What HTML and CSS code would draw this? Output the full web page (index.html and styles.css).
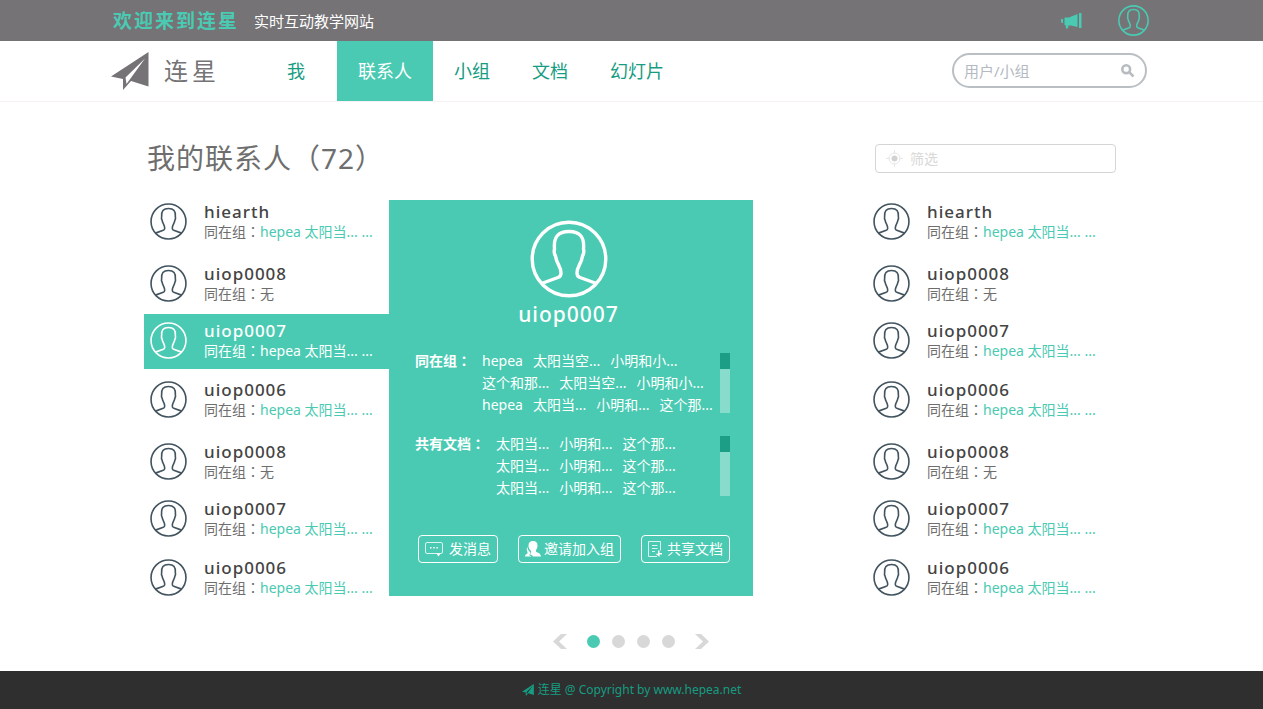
FILE: index.html
```html
<!DOCTYPE html>
<html lang="zh-CN">
<head>
<meta charset="utf-8">
<title>连星</title>
<meta name="viewport" content="width=device-width, initial-scale=1">
<link rel="stylesheet" href="styles.css">
</head>
<body>
<svg class="sprite" aria-hidden="true">
  <symbol id="avatar" viewBox="0 0 78 78">
    <circle cx="39" cy="39" r="36.8"/>
    <path d="M11.500 63.500 L28 57.500 Q31 56.500 31 53 C31 46 26.500 44 25.500 36 Q23.500 33 24.500 29 C23.500 17 28 11.500 39 11.500 S54.500 17 53.500 29 Q54.500 33 52.500 36 C51.500 44 47 46 47 53 Q47 56.500 50 57.500 L66.500 63.500"/>
  </symbol>
  <symbol id="plane" viewBox="0 0 38 38">
    <path fill-rule="evenodd" d="M37.500 0 L0 24.500 L12 27 V38 L20 29 L37.500 34.500 Z M34 6.500 L14.500 25.500 L15.500 32 Z"/>
  </symbol>
</svg>

<div class="topbar">
  <div class="wrap topbar-inner">
    <strong class="welcome">欢迎来到连星</strong>
    <span class="tagline">实时互动教学网站</span>
    <div class="topbar-actions">
      <button class="icon-button" type="button" aria-label="公告">
        <svg class="horn" viewBox="0 0 21 16"><path d="M18 0h2.500v15H18zM16.500 1v13L10 12.500H7.500L7 15.500H5L4.500 12H3.500V4.500H8zM0 6h2v4H1L0 9z"/></svg>
      </button>
      <button class="icon-button" type="button" aria-label="个人中心">
        <svg class="avatar avatar-top"><use href="#avatar"/></svg>
      </button>
    </div>
  </div>
</div>

<header class="header">
  <div class="wrap header-inner">
    <a class="logo" href="#"><svg class="logo-mark"><use href="#plane"/></svg><span>连星</span></a>
    <nav class="nav">
      <a class="nav-me" href="#">我</a>
      <a class="active" href="#" aria-current="page">联系人</a>
      <a href="#">小组</a>
      <a href="#">文档</a>
      <a href="#">幻灯片</a>
    </nav>
    <form class="search">
      <input type="search" placeholder="用户/小组" aria-label="用户/小组">
      <button class="icon-button" type="button" aria-label="搜索">
        <svg class="search-icon" viewBox="0 0 14 14"><circle cx="5.200" cy="5.200" r="3.900"/><path d="M8.200 8.200 L12.500 12.500"/></svg>
      </button>
    </form>
  </div>
</header>

<main class="main">
  <div class="title-row">
    <h1>我的联系人<span class="count">（72）</span></h1>
    <label class="filter">
      <svg class="filter-icon" viewBox="0 0 17 17"><circle class="ring" cx="8.500" cy="8.500" r="5.500"/><circle class="core" cx="8.500" cy="8.500" r="3"/><path class="ring" d="M8.500 0v4M8.500 13v4M0 8.500h4M13 8.500h4"/></svg>
      <input type="text" placeholder="筛选" aria-label="筛选">
    </label>
  </div>

  <div class="board">
    <ul class="contacts">
      <li><svg class="avatar"><use href="#avatar"/></svg><div><h2>hiearth</h2><p>同在组：<a href="#">hepea 太阳当... ...</a></p></div></li>
      <li><svg class="avatar"><use href="#avatar"/></svg><div><h2>uiop0008</h2><p>同在组：无</p></div></li>
      <li class="selected"><svg class="avatar"><use href="#avatar"/></svg><div><h2>uiop0007</h2><p>同在组：<a href="#">hepea 太阳当... ...</a></p></div></li>
      <li><svg class="avatar"><use href="#avatar"/></svg><div><h2>uiop0006</h2><p>同在组：<a href="#">hepea 太阳当... ...</a></p></div></li>
      <li><svg class="avatar"><use href="#avatar"/></svg><div><h2>uiop0008</h2><p>同在组：无</p></div></li>
      <li><svg class="avatar"><use href="#avatar"/></svg><div><h2>uiop0007</h2><p>同在组：<a href="#">hepea 太阳当... ...</a></p></div></li>
      <li><svg class="avatar"><use href="#avatar"/></svg><div><h2>uiop0006</h2><p>同在组：<a href="#">hepea 太阳当... ...</a></p></div></li>
    </ul>

    <section class="card">
      <div class="profile">
        <svg class="avatar avatar-large"><use href="#avatar"/></svg>
        <h2>uiop0007</h2>
      </div>
      <div class="shared">
        <h3>同在组：</h3>
        <ul class="shared-list">
          <li><span>hepea</span><span>太阳当空...</span><span>小明和小...</span></li>
          <li><span>这个和那...</span><span>太阳当空...</span><span>小明和小...</span></li>
          <li><span>hepea</span><span>太阳当...</span><span>小明和...</span><span>这个那...</span></li>
        </ul>
        <div class="track"><div class="thumb"></div></div>
      </div>
      <div class="shared">
        <h3>共有文档：</h3>
        <ul class="shared-list">
          <li><span>太阳当...</span><span>小明和...</span><span>这个那...</span></li>
          <li><span>太阳当...</span><span>小明和...</span><span>这个那...</span></li>
          <li><span>太阳当...</span><span>小明和...</span><span>这个那...</span></li>
        </ul>
        <div class="track"><div class="thumb"></div></div>
      </div>
      <div class="actions">
        <button type="button"><svg class="i-message" viewBox="0 0 18 16"><path class="line" d="M2 1.500h14q1.500 0 1.500 1.500v8q0 1.500-1.500 1.500H2Q.5 12.500.5 11V3Q.5 1.500 2 1.500z"/><path d="M11.500 12.500h4L13.500 15.500zM5 6h1.500v1.500H5zM8.200 6h1.500v1.500H8.200zM11.400 6h1.500v1.500h-1.500z"/></svg>发消息</button>
        <button type="button"><svg class="i-invite" viewBox="0 0 16 16"><path d="M8 0c3 0 4.500 1.500 4.500 4.500 0 2-.5 3-1.500 4.500v1.500c1 1.500 4.500 1 5 5H8c-.5-1-1.500-1.500-3-2 1-1 1.500-2 1-3.500C4.500 8.500 3.500 7 3.500 4.500 3.500 1.500 5 0 8 0z"/><path d="M2.500 6c0 2 1 4 3 5.500-.2 1.500-.8 2-1.500 2.500l2.500 1.500H0c0-2 1.500-2.500 2.500-3V11C1.500 9.500 1.500 7 2.500 6z"/></svg>邀请加入组</button>
        <button type="button"><svg class="i-share" viewBox="0 0 14 16"><path class="line" d="M9 15.500H.5V.5h12v9M4 4.500h5.500M4 7.500h5.500M4 10.500h3"/><path d="M10 9.500h1.500V12H14v1.500h-2.500V16L7.500 12.700H10z"/></svg>共享文档</button>
      </div>
    </section>

    <ul class="contacts contacts-right">
      <li><svg class="avatar"><use href="#avatar"/></svg><div><h2>hiearth</h2><p>同在组：<a href="#">hepea 太阳当... ...</a></p></div></li>
      <li><svg class="avatar"><use href="#avatar"/></svg><div><h2>uiop0008</h2><p>同在组：无</p></div></li>
      <li><svg class="avatar"><use href="#avatar"/></svg><div><h2>uiop0007</h2><p>同在组：<a href="#">hepea 太阳当... ...</a></p></div></li>
      <li><svg class="avatar"><use href="#avatar"/></svg><div><h2>uiop0006</h2><p>同在组：<a href="#">hepea 太阳当... ...</a></p></div></li>
      <li><svg class="avatar"><use href="#avatar"/></svg><div><h2>uiop0008</h2><p>同在组：无</p></div></li>
      <li><svg class="avatar"><use href="#avatar"/></svg><div><h2>uiop0007</h2><p>同在组：<a href="#">hepea 太阳当... ...</a></p></div></li>
      <li><svg class="avatar"><use href="#avatar"/></svg><div><h2>uiop0006</h2><p>同在组：<a href="#">hepea 太阳当... ...</a></p></div></li>
    </ul>
  </div>

  <nav class="pager" aria-label="分页">
    <button class="arrow" type="button" aria-label="上一页"><svg viewBox="0 0 14 15"><path d="M8 0h6L6 7.500 14 15H8L0 7.500z"/></svg></button>
    <div class="dots">
      <button class="dot current" type="button" aria-label="第1页"></button>
      <button class="dot" type="button" aria-label="第2页"></button>
      <button class="dot" type="button" aria-label="第3页"></button>
      <button class="dot" type="button" aria-label="第4页"></button>
    </div>
    <button class="arrow" type="button" aria-label="下一页"><svg viewBox="0 0 14 15"><path d="M6 0H0l8 7.500L0 15h6l8-7.500z"/></svg></button>
  </nav>
</main>

<footer class="footer">
  <svg class="footer-mark"><use href="#plane"/></svg>
  <span>连星 @ Copyright by www.hepea.net</span>
</footer>
</body>
</html>
```

FILE: styles.css
```css
:root {
  --teal: #4acab2;
  --teal-dark: #169c82;
  --gray: #757376;
  --pale: #d8d8d8;
  --centered-punctuation: "Noto Sans", "Noto Sans CJK TC", sans-serif;
}

* { box-sizing: border-box; }

body {
  margin: 0;
  min-height: 100vh;
  display: flex;
  flex-direction: column;
  background: #fff;
  color: #6e6e6e;
  font-family: "Noto Sans", "Noto Sans CJK SC", sans-serif;
  font-size: 14px;
  line-height: 20px;
}

h1, h2, h3, p, ul { margin: 0; padding: 0; }
ul { list-style: none; }
a { color: inherit; text-decoration: none; }
svg { display: block; flex: none; }
button, input { font: inherit; color: inherit; }

.sprite { position: absolute; width: 0; height: 0; }

.wrap {
  width: 100%;
  max-width: 1041px;
  margin: 0 auto;
  padding-right: 5px;
  display: flex;
  align-items: center;
}

.icon-button {
  display: flex;
  padding: 0;
  border: 0;
  background: none;
}

.avatar {
  width: 37px;
  height: 37px;
  fill: none;
  stroke: #42545f;
  stroke-width: 3.4;
}

/* Top bar */
.topbar { background: var(--gray); }
.topbar-inner { height: 41px; padding: 0 3px 0 2px; }
.welcome {
  color: var(--teal);
  font-size: 19px;
  letter-spacing: 2px;
  margin-right: 15px;
}
.tagline { color: #fff; font-size: 15px; }
.topbar-actions {
  display: flex;
  align-items: center;
  gap: 36px;
  margin-left: auto;
}
.horn { width: 21px; height: 16px; fill: var(--teal); }
.avatar-top { width: 31px; height: 31px; stroke: var(--teal); stroke-width: 4; }

/* Header */
.header { border-bottom: 1px solid #f6f2f4; }
.header-inner { height: 60px; }
.logo {
  display: flex;
  align-items: center;
  gap: 15px;
  width: 155px;
  color: var(--gray);
  font-size: 24px;
  letter-spacing: 4px;
}
.logo-mark { width: 38px; height: 38px; fill: var(--gray); }
.nav {
  display: flex;
  color: var(--teal-dark);
  font-size: 18px;
  line-height: 60px;
}
.nav a { padding: 0 21px; }
.nav .nav-me { margin-right: 11px; }
.nav .active { background: var(--teal); color: #fff; }

.search {
  display: flex;
  align-items: center;
  width: 195px;
  height: 35px;
  margin: 0 0 1px auto;
  padding: 0 10px;
  border: 2px solid #babfc4;
  border-radius: 18px;
}
.search input, .filter input {
  flex: 1;
  min-width: 0;
  padding: 0;
  border: 0;
  outline: 0;
  background: none;
}
.search input { font-size: 15px; }
.search input::placeholder { color: #b3bac2; opacity: 1; }
.search-icon { width: 14px; height: 14px; fill: none; stroke: #b8bcc0; stroke-width: 2.6; }

/* Contacts */
.main {
  flex: 1;
  width: 100%;
  max-width: 975px;
  margin: 0 auto;
  padding: 36px 3px 20px 0;
}
.title-row {
  display: flex;
  align-items: center;
  justify-content: space-between;
  padding-left: 3px;
  height: 41px;
}
h1 {
  font-size: 28px;
  font-weight: 400;
  line-height: 41px;
  letter-spacing: 1px;
}
.count { font-family: var(--centered-punctuation); font-feature-settings: "locl" 0; }
.filter {
  display: flex;
  align-items: center;
  gap: 7px;
  width: 241px;
  height: 29px;
  padding: 0 10px;
  border: 1px solid #d5d5d5;
  border-radius: 4px;
}
.filter input::placeholder { color: var(--pale); opacity: 1; }
.filter-icon { width: 17px; height: 17px; }
.filter-icon .ring { fill: none; stroke: #e6e6e6; }
.filter-icon .core { fill: #d2d2d2; }

.board {
  display: grid;
  grid-template-columns: 245px 364px 1fr 249px;
  align-items: start;
  padding-top: 16px;
}
.contacts-right { grid-column: 4; }
.contacts li {
  display: flex;
  align-items: center;
  gap: 17px;
  height: 55px;
  padding: 0 0 2px 6px;
  margin-bottom: 4px;
}
.contacts li:nth-child(3n + 1) { margin-bottom: 7px; }
.contacts li:nth-child(3n + 2) { margin-bottom: 2px; }
.contacts h2 {
  color: #444;
  font-size: 17px;
  font-weight: 500;
  line-height: 21px;
  letter-spacing: 1px;
}
.contacts p {
  font-family: var(--centered-punctuation);
  font-feature-settings: "locl" 0;
  white-space: nowrap;
}
.contacts a { color: var(--teal); }
.contacts .selected { background: var(--teal); }
.contacts .selected, .contacts .selected h2, .contacts .selected a { color: #fff; }
.contacts .selected .avatar { stroke: #fff; }

/* Contact card */
.card {
  margin-top: 5px;
  padding: 20px 23px 33px 26px;
  background: var(--teal);
  color: #fff;
}
.profile {
  display: flex;
  flex-direction: column;
  align-items: center;
  margin-bottom: 21px;
  padding-right: 8px;
}
.avatar-large {
  width: 78px;
  height: 78px;
  stroke: #fff;
}
.profile h2 {
  font-size: 21px;
  font-weight: 500;
  line-height: 32px;
  letter-spacing: 1px;
}
.shared { display: flex; margin-bottom: 17px; }
.shared h3 {
  margin-right: 11px;
  font-family: var(--centered-punctuation);
  font-feature-settings: "locl" 0;
  font-size: 14px;
  font-weight: 600;
  line-height: 20px;
}
.shared-list { flex: 1; }
.shared-list li {
  display: flex;
  gap: 10px;
  margin-bottom: 2px;
  white-space: nowrap;
}
.track { width: 10px; margin: 2px 0 4px; background: #88dccb; }
.thumb { height: 16px; background: #1c9d85; }
.actions {
  display: flex;
  justify-content: space-between;
  margin-top: 35px;
  padding-left: 3px;
}
.actions button {
  display: flex;
  align-items: center;
  height: 28px;
  padding: 0 6px;
  border: 1px solid #fff;
  border-radius: 4px;
  background: none;
}
.actions svg { height: 16px; fill: #fff; }
.actions .line { fill: none; stroke: #fff; stroke-opacity: .8; }
.actions .i-message { width: 18px; margin-right: 6px; }
.actions .i-invite { width: 16px; margin-right: 3px; }
.actions .i-share { width: 14px; margin-right: 5px; }

/* Pager */
.pager {
  display: flex;
  justify-content: center;
  align-items: center;
  gap: 20px;
  margin-top: 21px;
  padding-left: 2px;
}
.arrow { display: flex; padding: 0; border: 0; background: none; }
.arrow svg { width: 14px; height: 15px; fill: var(--pale); }
.dots { display: flex; gap: 12px; }
.dot {
  width: 13px;
  height: 13px;
  padding: 0;
  border: 0;
  border-radius: 50%;
  background: var(--pale);
}
.dot.current { background: var(--teal); }

/* Footer */
.footer {
  display: flex;
  justify-content: center;
  align-items: center;
  gap: 4px;
  height: 38px;
  background: #2f2f2f;
  color: var(--teal-dark);
  font-size: 12px;
}
.footer-mark { width: 12px; height: 12px; fill: var(--teal-dark); }
```
